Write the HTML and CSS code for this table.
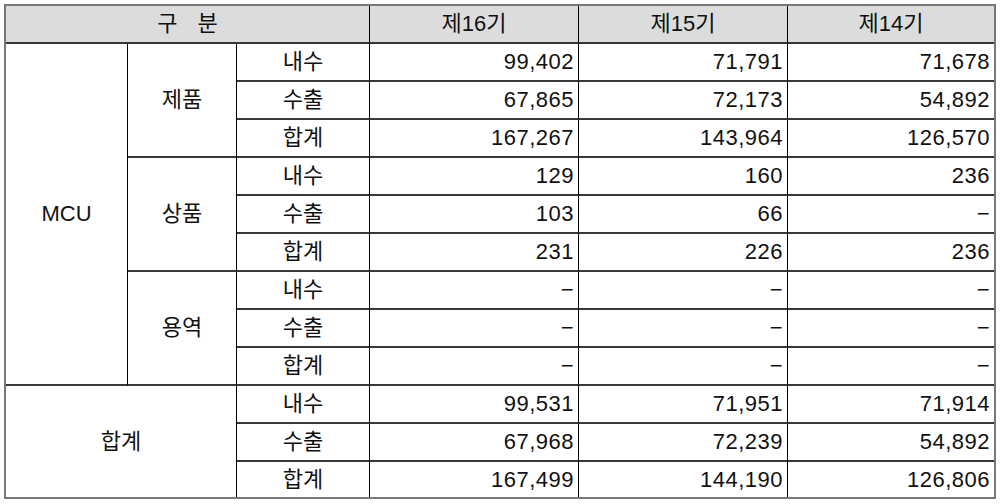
FILE: index.html
```html
<!DOCTYPE html>
<html lang="ko">
<head>
<meta charset="utf-8">
<link rel="stylesheet" href="styles.css">
</head>
<body>
<div class="frame">
<table class="sales">
<colgroup>
<col class="c1"><col class="c2"><col class="c3"><col class="c4"><col class="c5"><col class="c6">
</colgroup>
<thead>
<tr>
<th colspan="3" class="gubun">구 분</th>
<th>제16기</th>
<th>제15기</th>
<th class="last">제14기</th>
</tr>
</thead>
<tbody>
<tr>
<td rowspan="9" class="lbl">MCU</td>
<td rowspan="3" class="lbl">제품</td>
<td class="lbl">내수</td><td class="num">99,402</td><td class="num">71,791</td><td class="num last">71,678</td>
</tr>
<tr><td class="lbl">수출</td><td class="num">67,865</td><td class="num">72,173</td><td class="num last">54,892</td></tr>
<tr><td class="lbl">합계</td><td class="num">167,267</td><td class="num">143,964</td><td class="num last">126,570</td></tr>
<tr>
<td rowspan="3" class="lbl">상품</td>
<td class="lbl">내수</td><td class="num">129</td><td class="num">160</td><td class="num last">236</td>
</tr>
<tr><td class="lbl">수출</td><td class="num">103</td><td class="num">66</td><td class="num last">−</td></tr>
<tr><td class="lbl">합계</td><td class="num">231</td><td class="num">226</td><td class="num last">236</td></tr>
<tr>
<td rowspan="3" class="lbl">용역</td>
<td class="lbl">내수</td><td class="num">−</td><td class="num">−</td><td class="num last">−</td>
</tr>
<tr><td class="lbl">수출</td><td class="num">−</td><td class="num">−</td><td class="num last">−</td></tr>
<tr><td class="lbl">합계</td><td class="num">−</td><td class="num">−</td><td class="num last">−</td></tr>
<tr>
<td rowspan="3" colspan="2" class="lbl bottom">합계</td>
<td class="lbl">내수</td><td class="num">99,531</td><td class="num">71,951</td><td class="num last">71,914</td>
</tr>
<tr><td class="lbl">수출</td><td class="num">67,968</td><td class="num">72,239</td><td class="num last">54,892</td></tr>
<tr class="end"><td class="lbl bottom">합계</td><td class="num bottom">167,499</td><td class="num bottom">144,190</td><td class="num last bottom">126,806</td></tr>
</tbody>
</table>
</div>
</body>
</html>
```

FILE: styles.css
```css
html, body {
  margin: 0;
  padding: 0;
  background: #ffffff;
}

body {
  font-family: "Liberation Sans", "Noto Sans CJK KR", sans-serif;
  font-size: 22px;
  color: #111111;
}

.frame {
  margin: 4px 0 0 4px;
  width: 992px;
  height: 495px;
  box-sizing: border-box;
  border: 2px solid #777777;
}

.sales {
  width: 988px;
  table-layout: fixed;
  border-collapse: separate;
  border-spacing: 0;
}

.c1 { width: 122px; }
.c2 { width: 109px; }
.c3 { width: 133px; }
.c4 { width: 209px; }
.c5 { width: 209px; }
.c6 { width: 206px; }

.sales th,
.sales td {
  box-sizing: border-box;
  height: 38px;
  padding: 0;
  border-right: 1px solid #000000;
  border-bottom: 2px solid #383838;
  vertical-align: middle;
  font-weight: normal;
  line-height: 1;
  white-space: nowrap;
}

.sales th {
  background: #dcdcdc;
  text-align: center;
}

.gubun {
  word-spacing: 14px;
}

.lbl {
  text-align: center;
}

.num {
  text-align: right;
  letter-spacing: 0.5px;
  padding-right: 4px !important;
}

.sales .last {
  border-right: none;
}

.sales .bottom {
  border-bottom: none;
}

.end td {
  height: 35px;
}
```
